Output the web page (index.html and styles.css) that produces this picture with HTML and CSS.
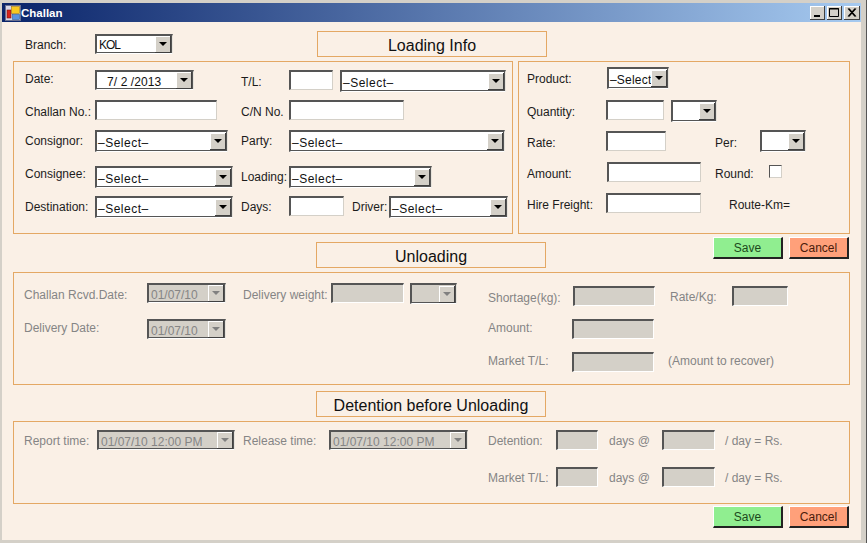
FILE: index.html
```html
<!DOCTYPE html>
<html lang="en">
<head>
    <meta charset="UTF-8">
    <title>Challan</title>
    <link rel="stylesheet" href="styles.css">
</head>
<body>
    <div class="window">
        <!-- Title bar -->
        <div class="titlebar">
            <svg class="app-icon" width="16" height="16" viewBox="0 0 16 16">
                <rect x="0.5" y="0.5" width="15" height="15" fill="#d8d8e8" stroke="#6a7090"/>
                <rect x="2" y="5" width="4" height="8" fill="#d8241c" stroke="#7a1410" stroke-width="0.6"/>
                <rect x="6.5" y="1.5" width="8" height="7" fill="#f8c820" stroke="#a07810" stroke-width="0.6"/>
                <rect x="7.5" y="9.5" width="7" height="5" fill="#5a94e0" stroke="#30609c" stroke-width="0.6"/>
            </svg>
            <span class="title">Challan</span>
            <div class="win-buttons">
                <div class="win-btn">
                    <svg width="15" height="14" viewBox="0 0 15 14"><rect x="4" y="9" width="6" height="2" fill="#000"/></svg>
                </div>
                <div class="win-btn">
                    <svg width="15" height="14" viewBox="0 0 15 14"><path d="M2.5 2.5h9v8h-9z M2 3h10" fill="none" stroke="#000"/></svg>
                </div>
                <div class="win-btn win-close">
                    <svg width="16" height="14" viewBox="0 0 16 14"><path d="M4 2.5l7 8M5 2.5l7 8M11 2.5l-7 8M12 2.5l-7 8" fill="none" stroke="#000" stroke-width="1.1"/></svg>
                </div>
            </div>
        </div>

        <div class="form">
            <!-- Branch + Loading Info -->
            <div class="top-row">
                <div class="branch">
                    <span class="lbl w70">Branch:</span>
                    <div class="combo w78 short"><span class="tight">KOL</span><i class="arrow"></i></div>
                </div>
                <div class="heading">Loading Info</div>
            </div>

            <div class="loading-panels">
                <div class="panel loading-left">
                    <span class="lbl lift1">Date:</span>
                    <div class="combo w99 short"><span class="date-text">7/ 2 /2013</span><i class="arrow"></i></div>
                    <span class="lbl low">T/L:</span>
                    <div class="cell">
                        <input class="w44" type="text">
                        <div class="combo w166 gap7"><span>–Select–</span><i class="arrow"></i></div>
                    </div>

                    <span class="lbl low">Challan No.:</span>
                    <input class="w122" type="text">
                    <span class="lbl low">C/N No.</span>
                    <input class="w115" type="text">

                    <span class="lbl">Consignor:</span>
                    <div class="combo w133"><span>–Select–</span><i class="arrow"></i></div>
                    <span class="lbl">Party:</span>
                    <div class="combo w216"><span>–Select–</span><i class="arrow"></i></div>

                    <span class="lbl lift2">Consignee:</span>
                    <div class="combo w138"><span>–Select–</span><i class="arrow"></i></div>
                    <span class="lbl">Loading:</span>
                    <div class="combo w143"><span>–Select–</span><i class="arrow"></i></div>

                    <span class="lbl">Destination:</span>
                    <div class="combo w138"><span>–Select–</span><i class="arrow"></i></div>
                    <span class="lbl">Days:</span>
                    <div class="cell">
                        <input class="w55" type="text">
                        <span class="lbl driver">Driver:</span>
                        <div class="combo w119"><span>–Select–</span><i class="arrow"></i></div>
                    </div>
                </div>

                <div class="panel loading-right">
                    <div class="row">
                        <span class="lbl w79 product">Product:</span>
                        <div class="combo w62 nudge raised"><span class="fit">–Select</span><i class="arrow"></i></div>
                    </div>
                    <div class="row">
                        <span class="lbl w79">Quantity:</span>
                        <input class="w58" type="text">
                        <div class="combo w46 gap7"><i class="arrow"></i></div>
                    </div>
                    <div class="row">
                        <span class="lbl w79">Rate:</span>
                        <input class="w60" type="text">
                        <span class="lbl per">Per:</span>
                        <div class="combo w46 raised"><i class="arrow"></i></div>
                    </div>
                    <div class="row">
                        <span class="lbl w79">Amount:</span>
                        <input class="w94 nudge" type="text">
                        <span class="lbl round">Round:</span>
                        <div class="check"></div>
                    </div>
                    <div class="row">
                        <span class="lbl w79">Hire Freight:</span>
                        <input class="w95" type="text">
                        <span class="lbl route">Route-Km=</span>
                    </div>
                </div>
            </div>

            <!-- Unloading -->
            <div class="section-row">
                <div class="heading">Unloading</div>
                <div class="actions">
                    <button class="btn save">Save</button>
                    <button class="btn cancel">Cancel</button>
                </div>
            </div>

            <div class="panel unloading disabled">
                <div class="unloading-left">
                    <div class="row">
                        <span class="lbl w123 low">Challan Rcvd.Date:</span>
                        <div class="combo w79 off short"><span>01/07/10</span><i class="arrow"></i></div>
                        <span class="lbl weight low">Delivery weight:</span>
                        <input class="w73" type="text" disabled>
                        <div class="combo w47 off gap6 mid"><i class="arrow"></i></div>
                    </div>
                    <div class="row next">
                        <span class="lbl w123 lift1">Delivery Date:</span>
                        <div class="combo w79 off short"><span>01/07/10</span><i class="arrow"></i></div>
                    </div>
                </div>
                <div class="unloading-right">
                    <div class="row">
                        <span class="lbl w85 low">Shortage(kg):</span>
                        <input class="w82" type="text" disabled>
                        <span class="lbl ratekg">Rate/Kg:</span>
                        <input class="w56" type="text" disabled>
                    </div>
                    <div class="row amount">
                        <span class="lbl w84 lift1">Amount:</span>
                        <input class="w82" type="text" disabled>
                    </div>
                    <div class="row market">
                        <span class="lbl w84 lift1">Market T/L:</span>
                        <input class="w82" type="text" disabled>
                        <span class="lbl recover lift1">(Amount to recover)</span>
                    </div>
                </div>
            </div>

            <!-- Detention -->
            <div class="detention-head">
                <div class="heading">Detention before Unloading</div>
            </div>

            <div class="panel detention disabled">
                <div class="detention-left">
                    <span class="lbl w73">Report time:</span>
                    <div class="combo w138 off short"><span>01/07/10 12:00 PM</span><i class="arrow"></i></div>
                    <span class="lbl release">Release time:</span>
                    <div class="combo w139 off short"><span>01/07/10 12:00 PM</span><i class="arrow"></i></div>
                </div>
                <div class="detention-right">
                    <div class="row">
                        <span class="lbl w68">Detention:</span>
                        <input class="w42" type="text" disabled>
                        <span class="lbl days">days @</span>
                        <input class="w53" type="text" disabled>
                        <span class="lbl perday">/ day = Rs.</span>
                    </div>
                    <div class="row market-days">
                        <span class="lbl w68">Market T/L:</span>
                        <input class="w42" type="text" disabled>
                        <span class="lbl days">days @</span>
                        <input class="w53" type="text" disabled>
                        <span class="lbl perday">/ day = Rs.</span>
                    </div>
                </div>
            </div>

            <div class="actions bottom">
                <button class="btn save">Save</button>
                <button class="btn cancel">Cancel</button>
            </div>
        </div>
    </div>
</body>
</html>
```

FILE: styles.css
```css
* {
    box-sizing: border-box;
}

body {
    margin: 0;
    font-family: "Liberation Sans", Arial, sans-serif;
    font-size: 12px;
    color: #1c1c1c;
}

/* Window frame */
.window {
    width: 867px;
    height: 543px;
    padding: 3px 5px 3px 2px;
    background: #d4d0c8;
    border-right: 1px solid #555;
    display: flex;
    flex-direction: column;
    overflow: hidden;
}

.titlebar {
    height: 19px;
    flex: none;
    display: flex;
    align-items: center;
    padding-left: 3px;
    background: linear-gradient(to right, #0a246a, #a6caf0);
}

.app-icon {
    flex: none;
}

.title {
    font-size: 11.5px;
    font-weight: bold;
    color: #fff;
}

.win-buttons {
    margin-left: auto;
    margin-right: 1px;
    display: flex;
    gap: 2px;
}

.win-btn {
    width: 15px;
    height: 14px;
    background: #d4d0c8;
    box-shadow: inset -1px -1px 0 #404040, inset 1px 1px 0 #fff;
}

.win-close {
    width: 16px;
}

/* Form area */
.form {
    flex: 1;
    padding: 0 11px;
    background: #faf0e6;
}

.top-row {
    margin-top: 9px;
    display: flex;
    align-items: center;
}

.branch {
    width: 304px;
    padding-left: 12px;
    display: flex;
}

.heading {
    width: 230px;
    height: 26px;
    border: 1px solid #e4a864;
    text-align: center;
    font-size: 16px;
    line-height: 27px;
    color: #111;
}

.panel {
    border: 1px solid #e4a864;
}

.loading-panels {
    margin-top: 4px;
    display: flex;
    gap: 5px;
}

.loading-left {
    width: 500px;
    height: 173px;
    padding: 8px 0 0 11px;
    display: grid;
    grid-template-columns: 70px 146px 48px 1fr;
    grid-template-rows: 30px 30px 36px 30px 22px;
    align-items: start;
}

.loading-right {
    width: 332px;
    height: 173px;
    padding: 6px 0 0 8px;
    display: grid;
    grid-template-rows: 32px 31px 31px 31px 20px;
}

.cell,
.row {
    display: flex;
    align-items: flex-start;
}

/* Labels */
.lbl {
    flex: none;
    height: 20px;
    margin-top: 1px;
    line-height: 20px;
    white-space: nowrap;
}

.low { margin-top: 2px; }
.lift1 { margin-top: -1px; }
.lift2 { margin-top: -2px; }

.loading-right .lbl { margin-top: 2px; }
.loading-right .product { margin-top: 1px; }

.driver {
    width: 37px;
    margin-left: 8px;
}

.per {
    margin-left: 49px;
    width: 45px;
}

.round {
    margin-left: 14px;
    width: 54px;
}

.route {
    margin-left: 28px;
}

.w68 { width: 68px; }
.w70 { width: 70px; }
.w73 { width: 73px; }
.w79 { width: 79px; }
.w84 { width: 84px; }
.w85 { width: 85px; }
.w123 { width: 123px; }

/* Text boxes */
input {
    flex: none;
    display: block;
    height: 20px;
    padding: 0 2px;
    margin: 0;
    background: #fff;
    border: 2px solid;
    border-color: #555 #d4d0c8 #d4d0c8 #555;
    border-width: 2px 1px 1px 2px;
    border-radius: 0;
    outline: none;
}

input:disabled {
    background: #d4d0c8;
    border-color: #555 #fff #fff #555;
}

.w42 { width: 42px; }
.w44 { width: 44px; }
.w53 { width: 53px; }
.w55 { width: 55px; }
.w56 { width: 56px; }
.w58 { width: 58px; }
.w60 { width: 60px; }
.w82 { width: 82px; }
.w94 { width: 94px; }
.w95 { width: 95px; }
.w115 { width: 115px; }
.w122 { width: 122px; }

/* Combo boxes and date pickers */
.combo {
    flex: none;
    height: 22px;
    display: flex;
    align-items: center;
    background: #fff;
    border: 2px solid;
    border-color: #555 #e8e4dc #fff #555;
    border-width: 2px 1px 1px 2px;
    box-shadow: inset -1px -1px 0 #555;
    color: #111;
    overflow: hidden;
}

.short { height: 20px; }
.mid { height: 21px; }
.raised { margin-top: -1px; }

.combo span {
    flex: 1;
    min-width: 0;
    padding: 2px 0 0 1px;
    white-space: nowrap;
    letter-spacing: 0.5px;
}

.combo .date-text {
    padding-left: 10px;
    letter-spacing: 0.1px;
}

.combo .tight {
    padding-left: 2px;
    letter-spacing: -1px;
}

.combo .fit {
    padding-left: 1px;
    letter-spacing: 0.2px;
}

.arrow {
    flex: none;
    position: relative;
    width: 16px;
    height: 17px;
    margin: 0 1px 0 auto;
    background: #d4d0c8;
    box-shadow: inset -1px -1px 0 #404040, inset 1px 1px 0 #fff;
}

.arrow::after {
    content: "";
    position: absolute;
    left: 4px;
    top: 6px;
    border: 4px solid transparent;
    border-top-color: #000;
    border-bottom: 0;
}

.w46 { width: 46px; }
.w47 { width: 47px; }
.w62 { width: 62px; }
.w78 { width: 78px; }
.w99 { width: 99px; }
.w119 { width: 119px; }
.w133 { width: 133px; }
.w138 { width: 138px; }
.w139 { width: 139px; }
.w143 { width: 143px; }
.w166 { width: 166px; }
.w216 { width: 216px; }

.gap6 { margin-left: 6px; }
.gap7 { margin-left: 7px; }
.nudge { margin-left: 1px; }

.check {
    flex: none;
    width: 13px;
    height: 13px;
    margin-top: 3px;
    background: #fff;
    border: 1px solid;
    border-color: #555 #d4d0c8 #d4d0c8 #555;
}

/* Disabled sections */
.disabled .lbl {
    color: #858585;
}

.combo.off {
    background: #d4d0c8;
}

.combo.off span {
    padding-left: 2px;
    color: #858585;
    letter-spacing: 0;
}

.combo.off .arrow::after {
    border-top-color: #808080;
}

.section-row {
    height: 38px;
    display: flex;
    justify-content: space-between;
    align-items: flex-start;
    padding-left: 303px;
}

.section-row .heading {
    margin-top: 8px;
}

.section-row .actions {
    margin-top: 3px;
}

.actions {
    display: flex;
    gap: 6px;
    justify-content: flex-end;
    padding-right: 1px;
}

.btn {
    height: 22px;
    padding: 0;
    font: inherit;
    color: #111;
    border: 0;
    border-right: 2px solid #222;
    border-bottom: 2px solid #222;
    border-left: 1px solid #fff;
    border-top: 1px solid #fff;
}

.save {
    width: 70px;
    background: #90ee90;
    color: #1c4a1c;
}

.cancel {
    width: 60px;
    background: #ffa07a;
    color: #4a1c0c;
}

.bottom {
    margin-top: 2px;
}

.unloading {
    height: 113px;
    padding: 10px 0 0 10px;
    display: flex;
}

.unloading-left {
    width: 464px;
}

.unloading-right {
    margin-top: 3px;
}

.next {
    margin-top: 14px;
}

.amount {
    margin-top: 11px;
}

.market {
    margin-top: 13px;
}

.weight {
    width: 88px;
    margin-left: 17px;
}

.ratekg {
    width: 62px;
    margin-left: 15px;
}

.recover {
    margin-left: 14px;
}

.detention-head {
    margin: 6px 0 4px;
    padding-left: 303px;
}

.detention {
    height: 83px;
    padding: 8px 0 0 10px;
    display: flex;
}

.detention-left {
    width: 464px;
    display: flex;
    align-items: flex-start;
}

.release {
    width: 86px;
    margin-left: 8px;
}

.market-days {
    margin-top: 16px;
}

.days {
    width: 53px;
    margin-left: 11px;
}

.perday {
    margin-left: 10px;
}
```
